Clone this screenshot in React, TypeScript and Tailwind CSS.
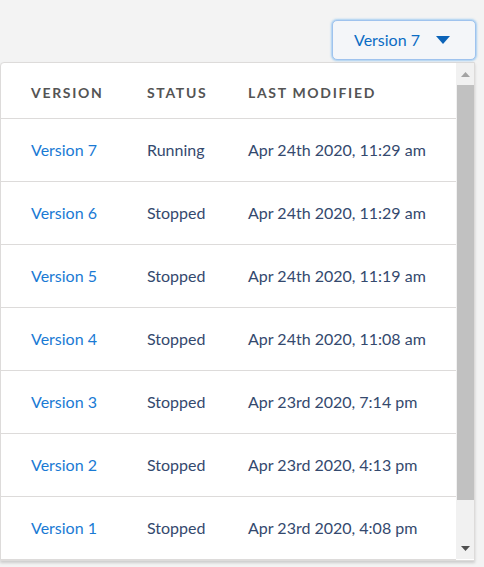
import React from "react";

const rows = [
  ["Version 7", "Running", "Apr 24th 2020, 11:29 am"],
  ["Version 6", "Stopped", "Apr 24th 2020, 11:29 am"],
  ["Version 5", "Stopped", "Apr 24th 2020, 11:19 am"],
  ["Version 4", "Stopped", "Apr 24th 2020, 11:08 am"],
  ["Version 3", "Stopped", "Apr 23rd 2020, 7:14 pm"],
  ["Version 2", "Stopped", "Apr 23rd 2020, 4:13 pm"],
  ["Version 1", "Stopped", "Apr 23rd 2020, 4:08 pm"],
];

export default function App() {
  return (
    <div
      className="w-[484px] h-[567px] bg-[#f3f3f3] overflow-hidden"
      style={{ fontFamily: "Lato, 'Open Sans', sans-serif" }}
    >
      <div className="flex justify-end pt-[20px] pr-[8px]">
        <button className="w-[144px] h-[40px] rounded-[5px] border border-[#9fc3ee] bg-[#f4f6f9] shadow-[0_0_2px_1px_rgba(21,137,238,0.35)] flex items-center pl-[21px] gap-[16px]">
          <span className="text-[16px] text-[#0b6cc4]">Version 7</span>
          <svg width="14" height="9" viewBox="0 0 14 9">
            <path d="M0 0 L14 0 L7 8 Z" fill="#0b63b8" />
          </svg>
        </button>
      </div>
      <div className="mt-[2px] ml-0 w-[475px] h-[499px] border border-[#dddbda] rounded-tl-[4px] bg-white flex shadow-[0_2px_3px_rgba(0,0,0,0.16)]">
        <div className="w-[455px] flex flex-col">
          <div className="h-[56px] pt-[3px] border-b border-[#dddbda] flex items-center text-[14px] font-bold tracking-[0.12em] text-[#545454]">
            <div className="w-[146px] pl-[30px]">VERSION</div>
            <div className="w-[101px]">STATUS</div>
            <div>LAST MODIFIED</div>
          </div>
          {rows.map((r) => (
            <div
              key={r[0]}
              className="h-[63px] border-b border-[#dddbda] flex items-center text-[16px]"
            >
              <div className="w-[146px] pl-[30px] text-[#1a7ad4]">{r[0]}</div>
              <div className="w-[101px] text-[#34496e]">{r[1]}</div>
              <div className="text-[#34496e]">{r[2]}</div>
            </div>
          ))}
        </div>
        <div className="w-[18px] h-[496px] bg-[#f1f1f1] flex flex-col items-center">
          <div className="h-[22px] flex items-center justify-center">
            <svg width="9" height="5" viewBox="0 0 9 5">
              <path d="M0 5 L9 5 L4.5 0 Z" fill="#a3a3a3" />
            </svg>
          </div>
          <div className="w-[17px] h-[415px] bg-[#c1c1c1]" />
          <div className="flex-1" />
          <div className="h-[22px] flex items-center justify-center">
            <svg width="9" height="5" viewBox="0 0 9 5">
              <path d="M0 0 L9 0 L4.5 5 Z" fill="#505050" />
            </svg>
          </div>
        </div>
      </div>
    </div>
  );
}
